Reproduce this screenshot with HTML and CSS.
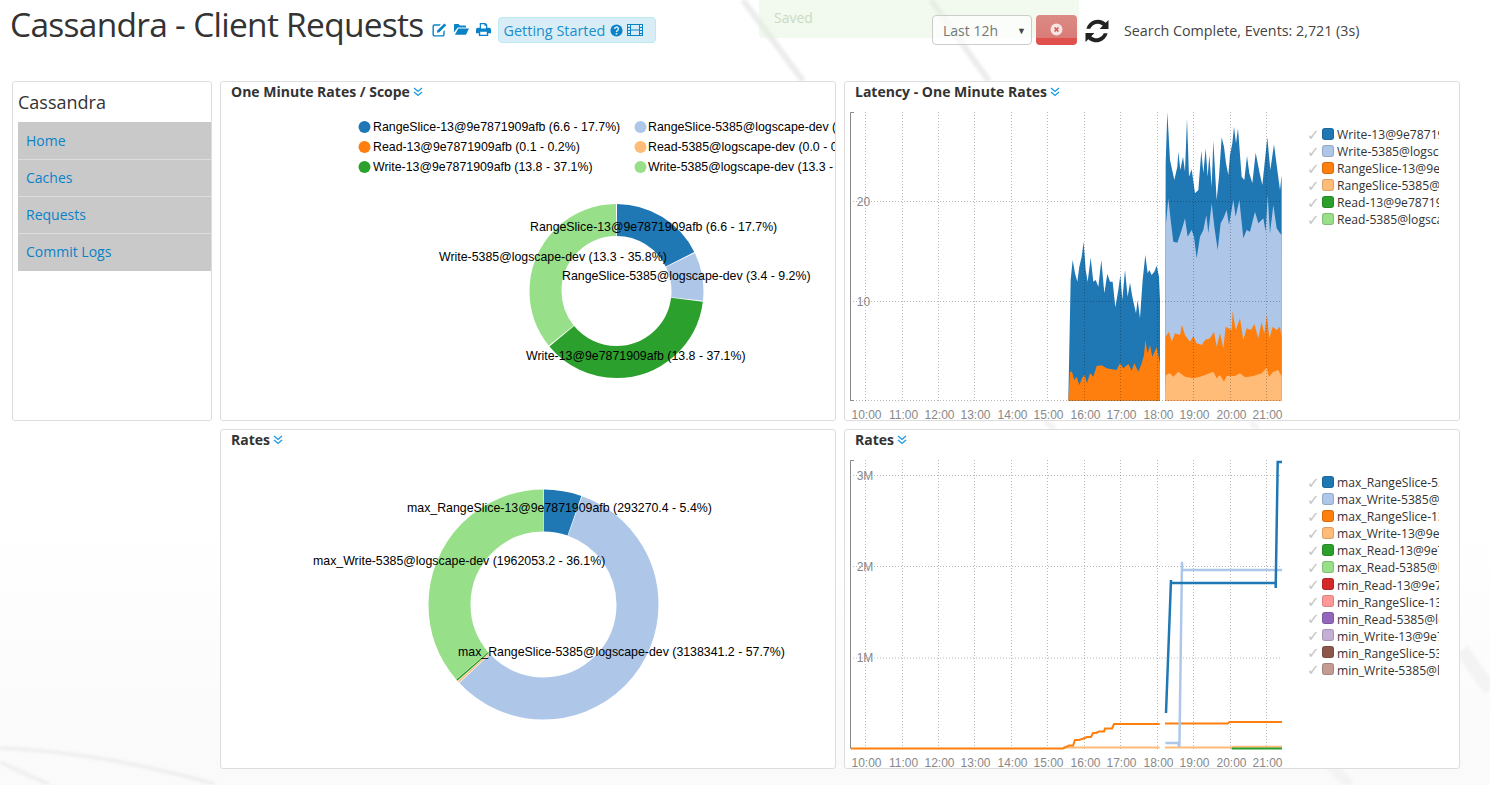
FILE: index.html
```html
<!DOCTYPE html>
<html lang="en">
<head>
    <meta charset="UTF-8">
    <title>Cassandra - Client Requests</title>
    <link rel="stylesheet" href="styles.css">
</head>
<body>
    <svg class="backdrop" viewBox="0 0 1490 785" aria-hidden="true">
        <g fill="none" stroke="#ececec">
            <path d="M743 0 L803 81" stroke-width="6"/>
            <path d="M931 0 L989 81" stroke-width="6"/>
            <path d="M0 748 Q100 752 215 784" stroke-width="3"/>
            <path d="M0 762 L50 785" stroke-width="3"/>
            <path d="M1462 650 L1490 690" stroke="#f3f3f3" stroke-width="14"/>
            <path d="M1330 765 L1350 785" stroke="#f3f3f3" stroke-width="10"/>
            <path d="M1045 421 L1055 429" stroke="#f3f3f3" stroke-width="6"/>
            <path d="M1250 421 L1258 429" stroke="#f3f3f3" stroke-width="6"/>
        </g>
    </svg>

    <div class="alert-saved">Saved</div>

    <header class="topbar">
        <div class="title-group">
            <h1>Cassandra - Client Requests</h1>
            <div class="title-icons">
                <svg class="icon" viewBox="0 0 16 16"><path d="M2.5 2.5h7l-1.5 1.5h-5.2a.8.8 0 0 0-.8.8v8.4a.8.8 0 0 0 .8.8h8.4a.8.8 0 0 0 .8-.8v-3.2l1.5-1.5v5a2 2 0 0 1-2 2h-9a2 2 0 0 1-2-2v-9a2 2 0 0 1 2-2z"/><path d="M13.2 1.5l2 2-7.4 7.4-2.6.6.6-2.6z"/></svg>
                <svg class="icon" viewBox="0 0 16 16"><path d="M0 3.2a1 1 0 0 1 1-1h4l1.2 1.4h5.6a1 1 0 0 1 1 1v1.2H4L0 11z"/><path d="M4.6 7H16l-3.2 6.5H1z"/></svg>
                <svg class="icon" viewBox="0 0 16 16"><path d="M4 1h6l2 2v3h2a2 2 0 0 1 2 2v4h-3v3H3v-3H0V8a2 2 0 0 1 2-2h2zM5.3 2.3V7h5.4V4H9V2.3zM4.5 10.5v3.2h7v-3.2z" fill-rule="evenodd"/></svg>
            </div>
            <a class="getting-started">
                Getting Started
                <svg class="gs-icon" viewBox="0 0 14 14"><circle cx="7" cy="7" r="6.5"/><path d="M5 5.4a2 2 0 1 1 3 1.7c-.7.4-1 .7-1 1.4" fill="none" stroke="#d9edf7" stroke-width="1.6"/><rect x="6.1" y="9.6" width="1.8" height="1.8" fill="#d9edf7"/></svg>
                <svg class="gs-icon film" viewBox="0 0 16 14"><path fill-rule="evenodd" d="M0 1h16v12H0zM1 2v2h2V2zm0 3v2h2V5zm0 3v2h2V8zm0 3v1h2v-1zM4 2v4.500h8V2zm0 5.500V12h8V7.500zM13 2v2h2V2zm0 3v2h2V5zm0 3v2h2V8zm0 3v1h2v-1z"/></svg>
            </a>
        </div>
        <div class="search-tools">
            <div class="range-select">Last 12h<span class="caret">▼</span></div>
            <button class="stop-btn"><svg viewBox="0 0 12 12"><circle cx="6" cy="6" r="5.500" fill="#f6e5e3"/><path d="M4.200 4.200l3.600 3.600M7.800 4.200l-3.600 3.600" stroke="#d9534f" stroke-width="1.500"/></svg></button>
            <svg class="refresh" viewBox="0 0 26 26"><path d="M24.500 2v9h-9l3.300-3.300A7.800 7.800 0 0 0 6.300 10.800H2.400A11.800 11.800 0 0 1 21.700 4.800z"/><path d="M1.500 24v-9h9l-3.300 3.300a7.800 7.800 0 0 0 12.500-3.100h3.900A11.800 11.800 0 0 1 4.300 21.200z"/></svg>
            <span class="search-status">Search Complete, Events: 2,721 (3s)</span>
        </div>
    </header>

    <main class="dashboard">
        <nav class="sidebar">
            <h2>Cassandra</h2>
            <ul class="menu">
                <li><a>Home</a></li>
                <li><a>Caches</a></li>
                <li><a>Requests</a></li>
                <li><a>Commit Logs</a></li>
            </ul>
        </nav>

        <section class="panel">
            <h3>One Minute Rates / Scope <svg class="chev" viewBox="0 0 10 10"><path d="M1 1l4 3.500L9 1M1 5l4 3.500L9 5"/></svg></h3>
            <svg class="chart-svg" viewBox="0 0 614 315">
                <g class="pie-legend">
                    <circle cx="143.500" cy="21" r="6" fill="#1f77b4"/><text x="152" y="25">RangeSlice-13@9e7871909afb (6.6 - 17.7%)</text>
                    <circle cx="419.500" cy="21" r="6" fill="#aec7e8"/><text x="427" y="25">RangeSlice-5385@logscape-dev (3.4 - 9.2%)</text>
                    <circle cx="143.500" cy="41" r="6" fill="#ff7f0e"/><text x="152" y="45">Read-13@9e7871909afb (0.1 - 0.2%)</text>
                    <circle cx="419.500" cy="41" r="6" fill="#ffbb78"/><text x="427" y="45">Read-5385@logscape-dev (0.0 - 0.0%)</text>
                    <circle cx="143.500" cy="61" r="6" fill="#2ca02c"/><text x="152" y="65">Write-13@9e7871909afb (13.8 - 37.1%)</text>
                    <circle cx="419.500" cy="61" r="6" fill="#98df8a"/><text x="427" y="65">Write-5385@logscape-dev (13.3 - 35.8%)</text>
                </g>
                <g transform="rotate(-90 395.500 185)" fill="none" stroke-width="32">
                    <circle class="slice" cx="395.500" cy="185" r="71" pathLength="100" stroke="#1f77b4" stroke-dasharray="17.500 82.500" stroke-dashoffset="-0.100"/>
                    <circle class="slice" cx="395.500" cy="185" r="71" pathLength="100" stroke="#aec7e8" stroke-dasharray="9 91" stroke-dashoffset="-17.800"/>
                    <circle class="slice" cx="395.500" cy="185" r="71" pathLength="100" stroke="#2ca02c" stroke-dasharray="37 63" stroke-dashoffset="-27"/>
                    <circle class="slice" cx="395.500" cy="185" r="71" pathLength="100" stroke="#98df8a" stroke-dasharray="35.700 64.300" stroke-dashoffset="-64.200"/>
                </g>
                <g class="pie-labels">
                    <text x="309" y="125">RangeSlice-13@9e7871909afb (6.6 - 17.7%)</text>
                    <text x="218" y="155">Write-5385@logscape-dev (13.3 - 35.8%)</text>
                    <text x="341" y="174">RangeSlice-5385@logscape-dev (3.4 - 9.2%)</text>
                    <text x="305" y="254">Write-13@9e7871909afb (13.8 - 37.1%)</text>
                </g>
            </svg>
        </section>

        <section class="panel">
            <h3>Latency - One Minute Rates <svg class="chev" viewBox="0 0 10 10"><path d="M1 1l4 3.500L9 1M1 5l4 3.500L9 5"/></svg></h3>
            <div class="chart-row">
                <svg class="plot" viewBox="0 0 440 315">
                    <g transform="translate(0 -6) scale(.33333)">
                        <path fill="#1f77b4" d="M670 902L675 640 677 540 683 480 690 520 697 545 703 500 710 470 716 425 722 510 728 545 737 473 745 545 752 540 760 560 769 480 778 580 787 522 795 545 803 545 811 622 820 570 826 525 832 600 840 510 848 590 855 548 862 590 873 640 878 600 885 655 893 540 901 465 908 520 913 510 920 525 928 515 935 497 942 530 945 600 945 902Z"/>
                        <path fill="#ff7f0e" d="M670 902L675 815 681 815 688 840 695 830 703 855 711 835 719 825 726 850 735 820 745 830 755 798 770 796 785 805 800 808 815 810 825 790 835 805 850 792 860 812 868 790 880 815 890 790 897 765 901 720 908 760 915 735 922 770 935 742 945 790 945 902Z"/>
                        <path fill="#1f77b4" d="M960 902L962 190 967 36 975 180 988 240 997 200 1000 155 1006 210 1014 170 1020 215 1026 55 1032 230 1040 208 1050 280 1060 270 1069 152 1075 220 1082 145 1088 230 1093 165 1100 260 1105 122 1115 300 1122 230 1130 112 1137 140 1143 190 1150 225 1155 165 1162 130 1167 80 1173 130 1179 85 1190 230 1198 240 1206 168 1213 220 1222 250 1232 158 1244 220 1252 255 1267 112 1276 210 1287 133 1297 210 1305 270 1310 225 1310 902Z"/>
                        <path fill="#aec7e8" d="M960 902L962 380 970 295 977 360 985 425 997 428 1010 390 1020 355 1028 410 1040 390 1047 410 1055 475 1065 410 1075 390 1084 345 1090 400 1100 310 1108 380 1118 450 1127 370 1135 355 1145 330 1152 375 1165 300 1172 350 1183 300 1195 415 1205 390 1215 395 1230 335 1240 370 1255 355 1262 395 1268 285 1275 400 1285 315 1295 385 1305 400 1310 405 1310 902Z"/>
                        <path fill="#ff7f0e" d="M960 902L962 710 972 695 980 725 990 700 1005 705 1011 675 1020 705 1035 725 1045 708 1055 730 1070 735 1080 720 1095 715 1107 695 1115 740 1125 700 1135 745 1142 680 1160 690 1163 632 1172 690 1185 655 1195 720 1205 685 1218 690 1228 672 1240 715 1250 665 1258 700 1266 645 1273 715 1283 680 1295 690 1305 680 1310 715 1310 902Z"/>
                        <path fill="#ffbb78" d="M960 902L962 825 975 820 985 830 1000 815 1020 830 1045 835 1065 830 1080 825 1105 815 1115 835 1125 825 1137 845 1145 828 1170 828 1185 820 1200 832 1225 828 1250 820 1265 803 1272 830 1285 815 1300 810 1310 830 1310 902Z"/>
                    </g>
                    <g class="grid">
                        <path d="M20.500 6V295M57.500 6V295M93.500 6V295M129.500 6V295M166.500 6V295M202.500 6V295M239.500 6V295M275.500 6V295M312.500 6V295M348.500 6V295M385.500 6V295M421.500 6V295"/>
                        <path d="M5 95.500H437M5 195.500H437M5 294.500H437"/>
                    </g>
                    <path class="axis" d="M9 6.500H5.500V294.500H9"/>
                    <g class="ticks">
                        <text class="y-tick" x="18.500" y="100">20</text>
                        <text class="y-tick" x="18.500" y="200">10</text>
                        <text x="21.500" y="313">10:00</text><text x="58.500" y="313">11:00</text><text x="94.500" y="313">12:00</text><text x="130.500" y="313">13:00</text><text x="167.500" y="313">14:00</text><text x="203.500" y="313">15:00</text><text x="240.500" y="313">16:00</text><text x="276.500" y="313">17:00</text><text x="313.500" y="313">18:00</text><text x="349.500" y="313">19:00</text><text x="386.500" y="313">20:00</text><text x="422.500" y="313">21:00</text>
                    </g>
                </svg>
                <ul class="legend">
                    <li><i>✓</i><b class="c1"></b><span>Write-13@9e7871909afb</span></li>
                    <li><i>✓</i><b class="c2"></b><span>Write-5385@logscape-dev</span></li>
                    <li><i>✓</i><b class="c3"></b><span>RangeSlice-13@9e7871909afb</span></li>
                    <li><i>✓</i><b class="c4"></b><span>RangeSlice-5385@logscape-dev</span></li>
                    <li><i>✓</i><b class="c5"></b><span>Read-13@9e7871909afb</span></li>
                    <li><i>✓</i><b class="c6"></b><span>Read-5385@logscape-dev</span></li>
                </ul>
            </div>
        </section>

        <section class="panel panel-low">
            <h3>Rates <svg class="chev" viewBox="0 0 10 10"><path d="M1 1l4 3.500L9 1M1 5l4 3.500L9 5"/></svg></h3>
            <svg class="chart-svg" viewBox="0 0 614 315">
                <g transform="rotate(-90 322.500 150.500)" fill="none" stroke-width="42">
                    <circle class="slice" cx="322.500" cy="150.500" r="94" pathLength="100" stroke="#1f77b4" stroke-dasharray="5.300 94.700" stroke-dashoffset="-0.050"/>
                    <circle class="slice" cx="322.500" cy="150.500" r="94" pathLength="100" stroke="#aec7e8" stroke-dasharray="57.600 42.400" stroke-dashoffset="-5.450"/>
                    <circle class="slice" cx="322.500" cy="150.500" r="94" pathLength="100" stroke="#ffbb78" stroke-dasharray="0.200 99.800" stroke-dashoffset="-63.150"/>
                    <circle class="slice" cx="322.500" cy="150.500" r="94" pathLength="100" stroke="#2ca02c" stroke-dasharray="0.250 99.750" stroke-dashoffset="-63.450"/>
                    <circle class="slice" cx="322.500" cy="150.500" r="94" pathLength="100" stroke="#98df8a" stroke-dasharray="36.200 63.800" stroke-dashoffset="-63.750"/>
                </g>
                <g class="pie-labels">
                    <text x="186" y="58">max_RangeSlice-13@9e7871909afb (293270.4 - 5.4%)</text>
                    <text x="92" y="111">max_Write-5385@logscape-dev (1962053.2 - 36.1%)</text>
                    <text x="237" y="202">max_RangeSlice-5385@logscape-dev (3138341.2 - 57.7%)</text>
                </g>
            </svg>
        </section>

        <section class="panel panel-low">
            <h3>Rates <svg class="chev" viewBox="0 0 10 10"><path d="M1 1l4 3.500L9 1M1 5l4 3.500L9 5"/></svg></h3>
            <div class="chart-row">
                <svg class="plot" viewBox="0 0 440 315">
                    <g class="grid">
                        <path d="M20.500 6V295M57.500 6V295M93.500 6V295M129.500 6V295M166.500 6V295M202.500 6V295M239.500 6V295M275.500 6V295M312.500 6V295M348.500 6V295M385.500 6V295M421.500 6V295"/>
                        <path d="M5 21.500H437M5 112.500H437M5 204H437"/>
                    </g>
                    <path class="axis" d="M9 6.500H5.500V294.500H9"/>
                    <g fill="none" stroke-width="2">
                        <path stroke="#ffbb78" d="M218 293.500H314.700M320 293.500H386L389 292.700H437"/>
                        <path stroke="#2ca02c" d="M386.700 294.500H437"/>
                        <path stroke="#ff7f0e" d="M6 294.500H218L224 291.500H228L230 286H234L240 284 242 283H246L248 279H251L254 277.500H259L260 274.500H262H267L269 270H314.700M320 269.500H382.600L384.600 268H437"/>
                        <path stroke="#aec7e8" stroke-width="2.500" d="M320.400 289H333L334.400 292.700 337 107.700V116H437"/>
                        <path stroke="#1f77b4" stroke-width="2.500" d="M321 259L326 126V129H430.700V134L432.700 8H437"/>
                    </g>
                    <g class="ticks">
                        <text class="y-tick" x="20" y="25.500">3M</text>
                        <text class="y-tick" x="20" y="116.500">2M</text>
                        <text class="y-tick" x="20" y="208">1M</text>
                        <text x="21.500" y="313">10:00</text><text x="58.500" y="313">11:00</text><text x="94.500" y="313">12:00</text><text x="130.500" y="313">13:00</text><text x="167.500" y="313">14:00</text><text x="203.500" y="313">15:00</text><text x="240.500" y="313">16:00</text><text x="276.500" y="313">17:00</text><text x="313.500" y="313">18:00</text><text x="349.500" y="313">19:00</text><text x="386.500" y="313">20:00</text><text x="422.500" y="313">21:00</text>
                    </g>
                </svg>
                <ul class="legend">
                    <li><i>✓</i><b class="c1"></b><span>max_RangeSlice-5385@logscape-dev</span></li>
                    <li><i>✓</i><b class="c2"></b><span>max_Write-5385@logscape-dev</span></li>
                    <li><i>✓</i><b class="c3"></b><span>max_RangeSlice-13@9e7871909afb</span></li>
                    <li><i>✓</i><b class="c4"></b><span>max_Write-13@9e7871909afb</span></li>
                    <li><i>✓</i><b class="c5"></b><span>max_Read-13@9e7871909afb</span></li>
                    <li><i>✓</i><b class="c6"></b><span>max_Read-5385@logscape-dev</span></li>
                    <li><i>✓</i><b class="c7"></b><span>min_Read-13@9e7871909afb</span></li>
                    <li><i>✓</i><b class="c8"></b><span>min_RangeSlice-13@9e7871909afb</span></li>
                    <li><i>✓</i><b class="c9"></b><span>min_Read-5385@logscape-dev</span></li>
                    <li><i>✓</i><b class="c10"></b><span>min_Write-13@9e7871909afb</span></li>
                    <li><i>✓</i><b class="c11"></b><span>min_RangeSlice-5385@logscape-dev</span></li>
                    <li><i>✓</i><b class="c12"></b><span>min_Write-5385@logscape-dev</span></li>
                </ul>
            </div>
        </section>
    </main>
</body>
</html>
```

FILE: styles.css
```css
* {
    box-sizing: border-box;
}

html, body {
    height: 785px;
    overflow: hidden;
}

body {
    margin: 0;
    background: linear-gradient(#fff 0, #fff 65%, #fafafa 100%);
    color: #333;
    font-family: "Open Sans", sans-serif;
    font-size: 13px;
    position: relative;
}

.backdrop {
    position: absolute;
    left: 0;
    top: 0;
    width: 1490px;
    height: 785px;
    filter: blur(1.500px);
}

.alert-saved {
    position: absolute;
    left: 759px;
    top: 0;
    width: 320px;
    height: 38px;
    padding: 8px 15px;
    background-color: rgba(223, 240, 216, .4);
    border-radius: 0 0 4px 4px;
    color: #c8dcc0;
    font-size: 14px;
}

.topbar {
    position: relative;
    display: flex;
    height: 81px;
    padding-left: 10px;
}

.title-group {
    display: flex;
    align-items: flex-start;
    width: 922px;
}

h1 {
    margin: 0;
    font-size: 33.500px;
    font-weight: 400;
    letter-spacing: -.72px;
    line-height: 48px;
    color: #333;
}

.title-icons {
    display: flex;
    gap: 7px;
    margin: 22px 0 0 8px;
}

.icon {
    width: 15px;
    height: 15px;
    fill: #0a82c8;
}

.getting-started {
    display: flex;
    align-items: center;
    height: 26px;
    margin: 17px 0 0 7px;
    padding: 0 12px 0 5px;
    background-color: #d9edf7;
    border: 1px solid #bce8f1;
    border-radius: 4px;
    color: #1a8fce;
    font-size: 14.400px;
}

.gs-icon {
    width: 13px;
    height: 13px;
    margin-left: 5px;
    fill: #0a82c8;
}

.gs-icon.film {
    width: 16px;
    height: 14px;
    margin-left: 4px;
}

.search-tools {
    display: flex;
    align-items: flex-start;
    padding-top: 15px;
}

.range-select {
    display: flex;
    align-items: center;
    justify-content: space-between;
    width: 100px;
    height: 30px;
    padding: 0 5px 0 10px;
    border: 1px solid #ccc;
    border-radius: 4px;
    background-color: rgba(255, 255, 255, .6);
    color: #777;
    font-size: 14px;
}

.caret {
    color: #444;
    font-size: 9px;
}

.stop-btn {
    display: flex;
    align-items: center;
    justify-content: center;
    width: 41px;
    height: 30px;
    margin-left: 4px;
    padding: 0 0 1px;
    border: none;
    border-radius: 4px;
    background: linear-gradient(#dc8a85 0, #d97c77 76%, #e0504c 77%);
}

.stop-btn svg {
    width: 13px;
    height: 13px;
}

.refresh {
    width: 26px;
    height: 26px;
    margin: 3px 0 0 7px;
    fill: #222;
}

.search-status {
    margin: 6px 0 0 14px;
    color: #444;
    font-size: 14.300px;
}

.dashboard {
    position: relative;
    display: grid;
    grid-template-columns: 200px 616px 616px;
    grid-template-rows: 340px 340px;
    gap: 8px;
    padding-left: 12px;
}

.sidebar, .panel {
    background-color: #fff;
    border: 1px solid #ddd;
    border-radius: 3px;
    overflow: hidden;
}

.sidebar {
    padding-left: 5px;
}

.sidebar h2 {
    margin: 0;
    padding-top: 8px;
    height: 40px;
    font-size: 18px;
    font-weight: 400;
    line-height: 24px;
}

.menu {
    margin: 0;
    padding: 1px 0 0;
    list-style: none;
    background-color: #c9c9c9;
}

.menu li {
    height: 37px;
    padding-left: 8px;
    border-bottom: 1px solid #ddd;
    font-size: 14px;
    line-height: 36px;
    color: #0a82c8;
}

.menu li:last-child {
    border-bottom: none;
}

.panel-low {
    grid-column-start: 2;
}

.panel-low + .panel-low {
    grid-column-start: 3;
}

.panel h3 {
    display: flex;
    align-items: center;
    gap: 3px;
    height: 24px;
    margin: 0;
    padding: 0 0 4px 10px;
    font-size: 14px;
    font-weight: 700;
    line-height: 20px;
}

.chev {
    width: 10px;
    height: 10px;
    fill: none;
    stroke: #1a9ae0;
    stroke-width: 1.300;
}

.chart-svg {
    display: block;
    width: 614px;
    height: 315px;
}

.chart-row {
    display: flex;
}

.plot {
    flex: none;
    display: block;
    width: 440px;
    height: 315px;
}

.pie-legend text, .pie-labels text {
    font-family: "Liberation Sans", Arial, sans-serif;
    font-size: 12.350px;
    fill: #000;
}

.slice {
    stroke-linecap: butt;
}

.grid path {
    fill: none;
    stroke: #000;
    stroke-opacity: .28;
    stroke-dasharray: 1 2;
}

.axis {
    fill: none;
    stroke: #888;
}

.ticks text {
    font-family: "Liberation Sans", Arial, sans-serif;
    font-size: 12px;
    fill: #888;
    text-anchor: middle;
}

.legend {
    flex: none;
    width: 132px;
    margin: 20px 0 0 22px;
    padding: 0;
    list-style: none;
    overflow: hidden;
}

.legend li {
    display: flex;
    align-items: center;
    height: 17.090px;
    white-space: nowrap;
    font-size: 12.150px;
    color: #333;
}

.legend i {
    flex: none;
    width: 15px;
    font-family: "DejaVu Sans", sans-serif;
    font-style: normal;
    font-size: 15px;
    color: #c4c4c4;
}

.legend b {
    flex: none;
    width: 12px;
    height: 12px;
    margin: -2px 3px 0 0;
    border-radius: 3px;
    border: 1px solid rgba(0, 0, 0, .15);
}

.legend .c1 { background-color: #1f77b4; }
.legend .c2 { background-color: #aec7e8; }
.legend .c3 { background-color: #ff7f0e; }
.legend .c4 { background-color: #ffbb78; }
.legend .c5 { background-color: #2ca02c; }
.legend .c6 { background-color: #98df8a; }
.legend .c7 { background-color: #d62728; }
.legend .c8 { background-color: #ff9896; }
.legend .c9 { background-color: #9467bd; }
.legend .c10 { background-color: #c5b0d5; }
.legend .c11 { background-color: #8c564b; }
.legend .c12 { background-color: #c49c94; }
```
